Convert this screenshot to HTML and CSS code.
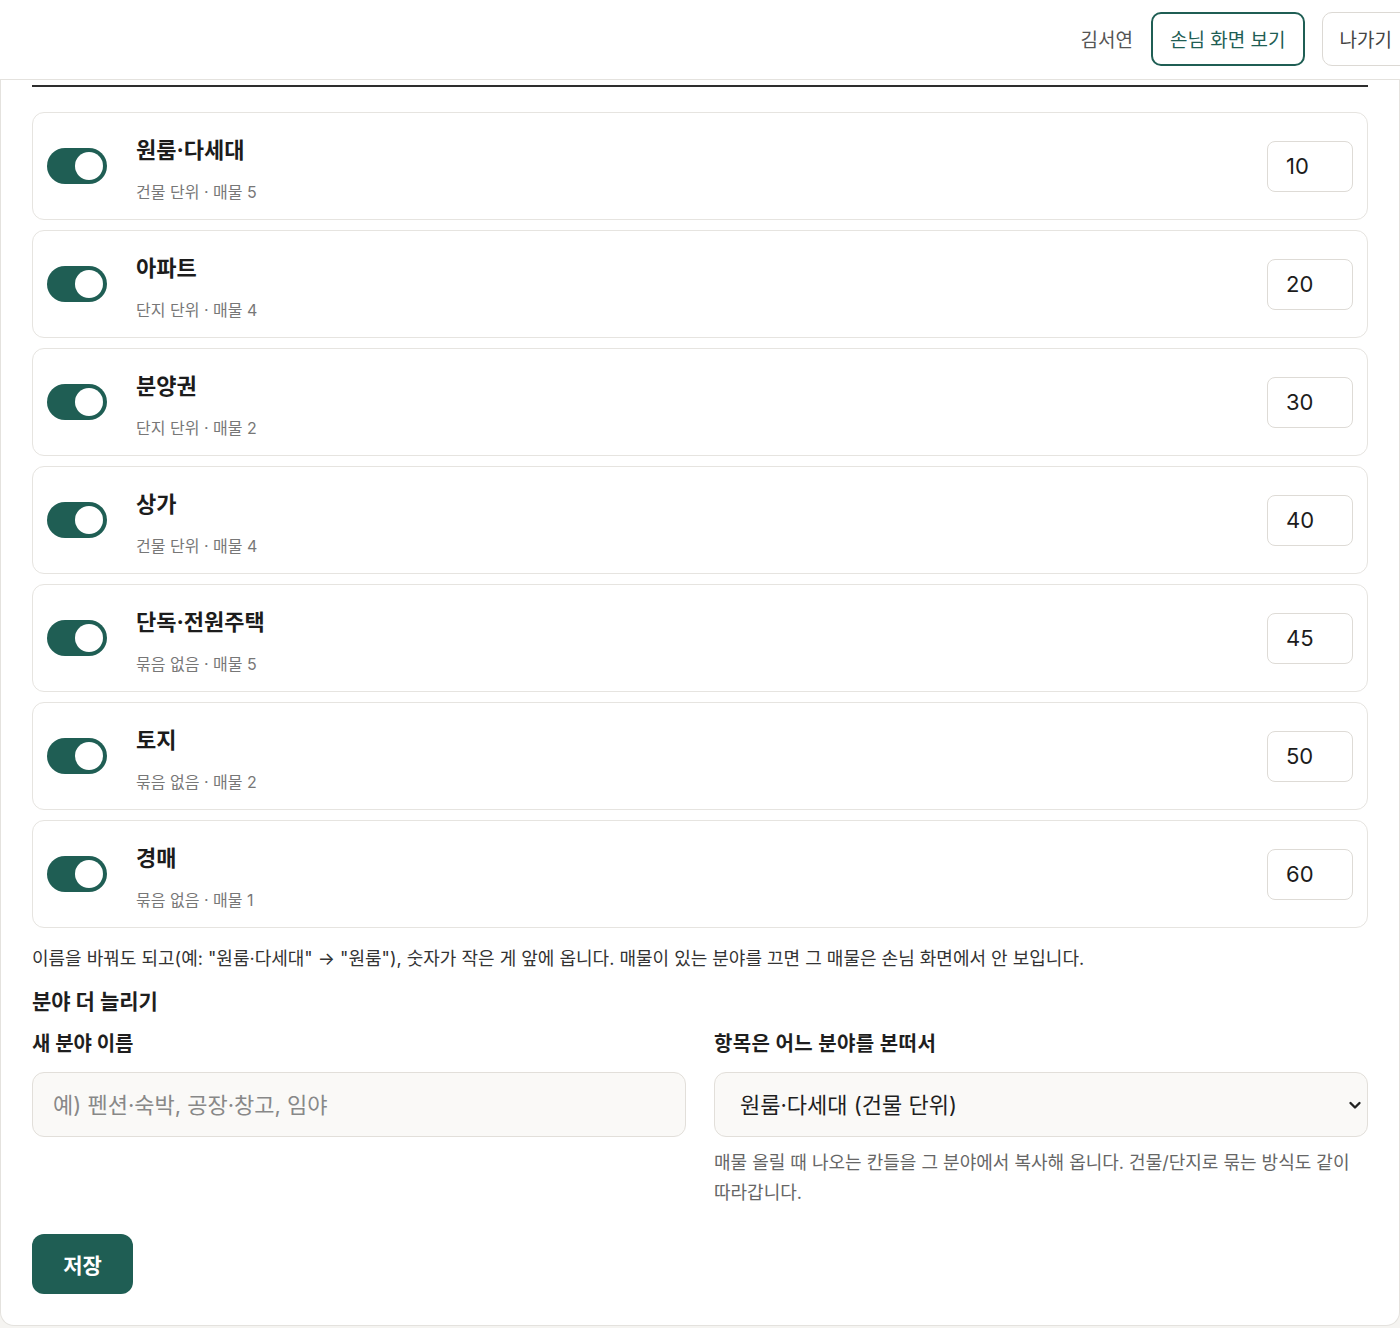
FILE: index.html
```html
<!DOCTYPE html>
<html lang="ko">
<head>
    <meta charset="UTF-8">
    <meta name="viewport" content="width=device-width, initial-scale=1.0">
    <title>분야 관리</title>
    <link rel="stylesheet" href="styles.css">
</head>
<body>
    <!-- Top bar -->
    <header class="topbar">
        <div class="topbar-nav">
            <span class="user-name">김서연</span>
            <a class="btn-outline btn-accent" href="#">손님 화면 보기</a>
            <a class="btn-outline" href="#">나가기</a>
        </div>
    </header>

    <!-- Category settings -->
    <main class="panel">
        <div class="panel-rule"></div>

        <ul class="category-list">
            <li class="category-row">
                <label class="switch"><input type="checkbox" checked><span class="slider"></span></label>
                <div class="category-info">
                    <div class="category-name">원룸·다세대</div>
                    <div class="category-meta">건물 단위 · 매물 5</div>
                </div>
                <input class="order-input" type="text" value="10">
            </li>
            <li class="category-row">
                <label class="switch"><input type="checkbox" checked><span class="slider"></span></label>
                <div class="category-info">
                    <div class="category-name">아파트</div>
                    <div class="category-meta">단지 단위 · 매물 4</div>
                </div>
                <input class="order-input" type="text" value="20">
            </li>
            <li class="category-row">
                <label class="switch"><input type="checkbox" checked><span class="slider"></span></label>
                <div class="category-info">
                    <div class="category-name">분양권</div>
                    <div class="category-meta">단지 단위 · 매물 2</div>
                </div>
                <input class="order-input" type="text" value="30">
            </li>
            <li class="category-row">
                <label class="switch"><input type="checkbox" checked><span class="slider"></span></label>
                <div class="category-info">
                    <div class="category-name">상가</div>
                    <div class="category-meta">건물 단위 · 매물 4</div>
                </div>
                <input class="order-input" type="text" value="40">
            </li>
            <li class="category-row">
                <label class="switch"><input type="checkbox" checked><span class="slider"></span></label>
                <div class="category-info">
                    <div class="category-name">단독·전원주택</div>
                    <div class="category-meta">묶음 없음 · 매물 5</div>
                </div>
                <input class="order-input" type="text" value="45">
            </li>
            <li class="category-row">
                <label class="switch"><input type="checkbox" checked><span class="slider"></span></label>
                <div class="category-info">
                    <div class="category-name">토지</div>
                    <div class="category-meta">묶음 없음 · 매물 2</div>
                </div>
                <input class="order-input" type="text" value="50">
            </li>
            <li class="category-row">
                <label class="switch"><input type="checkbox" checked><span class="slider"></span></label>
                <div class="category-info">
                    <div class="category-name">경매</div>
                    <div class="category-meta">묶음 없음 · 매물 1</div>
                </div>
                <input class="order-input" type="text" value="60">
            </li>
        </ul>

        <p class="note">이름을 바꿔도 되고(예: "원룸·다세대" → "원룸"), 숫자가 작은 게 앞에 옵니다. 매물이 있는 분야를 끄면 그 매물은 손님 화면에서 안 보입니다.</p>

        <h3 class="section-title">분야 더 늘리기</h3>

        <div class="add-grid">
            <div class="field">
                <label class="field-label" for="new-name">새 분야 이름</label>
                <input class="field-input" id="new-name" type="text" placeholder="예) 펜션·숙박, 공장·창고, 임야">
            </div>
            <div class="field">
                <label class="field-label" for="base-category">항목은 어느 분야를 본떠서</label>
                <div class="select-wrap">
                    <select class="field-input field-select" id="base-category">
                        <option>원룸·다세대 (건물 단위)</option>
                        <option>아파트 (단지 단위)</option>
                        <option>분양권 (단지 단위)</option>
                        <option>상가 (건물 단위)</option>
                        <option>단독·전원주택 (묶음 없음)</option>
                        <option>토지 (묶음 없음)</option>
                        <option>경매 (묶음 없음)</option>
                    </select>
                    <svg class="select-arrow" width="14" height="14" viewBox="0 0 14 14"><path d="M2.5 5l4.5 4.5L11.5 5" fill="none" stroke="#222" stroke-width="2.4" stroke-linecap="round" stroke-linejoin="round"/></svg>
                </div>
                <p class="field-help">매물 올릴 때 나오는 칸들을 그 분야에서 복사해 옵니다. 건물/단지로 묶는 방식도 같이 따라갑니다.</p>
            </div>
        </div>

        <button class="btn-save">저장</button>
    </main>
</body>
</html>
```

FILE: styles.css
```css
body {
    font-family: "Inter", "Noto Sans CJK KR", sans-serif;
    margin: 0;
    padding: 0;
    background-color: #f5f4f1;
    color: #1f1f1f;
    width: 1400px;
    overflow: hidden;
}

/* top bar */
.topbar {
    height: 79px;
    background-color: #fff;
    border-bottom: 1px solid #e4e2de;
    display: flex;
    justify-content: flex-end;
    align-items: center;
    overflow: hidden;
}

.topbar-nav {
    display: flex;
    align-items: center;
    gap: 17px;
    margin-right: -10px;
    margin-top: -2px;
}

.user-name {
    font-size: 19px;
    color: #555;
    margin-right: 1px;
}

.btn-outline {
    display: inline-flex;
    align-items: center;
    height: 54px;
    padding: 0 17px;
    border: 1px solid #dcd9d4;
    border-radius: 10px;
    background-color: #fff;
    font-size: 19px;
    color: #444;
    text-decoration: none;
    box-sizing: border-box;
}

.btn-accent {
    border: 2px solid #1f5e54;
    color: #1f5e54;
}

/* panel */
.panel {
    background-color: #fff;
    border: 1px solid #e4e2de;
    border-top: none;
    border-radius: 0 0 14px 14px;
    padding: 5px 31px 31px;
    margin-bottom: 2px;
}

.panel-rule {
    height: 2px;
    background-color: #2e2e2e;
}

.category-list {
    list-style: none;
    margin: 25px 0 0;
    padding: 0;
    display: flex;
    flex-direction: column;
    gap: 10px;
}

.category-row {
    display: flex;
    align-items: center;
    height: 108px;
    box-sizing: border-box;
    border: 1px solid #e6e4e0;
    border-radius: 12px;
    padding: 0 14px;
}

.switch {
    position: relative;
    width: 60px;
    height: 36px;
    flex-shrink: 0;
}

.switch input {
    display: none;
}

.slider {
    position: absolute;
    inset: 0;
    border-radius: 18px;
    background-color: #cfcbc4;
}

.slider::after {
    content: "";
    position: absolute;
    top: 4px;
    left: 4px;
    width: 28px;
    height: 28px;
    border-radius: 50%;
    background-color: #fff;
}

.switch input:checked + .slider {
    background-color: #1f5e54;
}

.switch input:checked + .slider::after {
    left: 28px;
}

.category-info {
    flex: 1;
    margin-left: 29px;
    margin-top: 6px;
}

.category-name {
    font-size: 22px;
    font-weight: 700;
    color: #1c1c1c;
    line-height: 30px;
}

.category-meta {
    font-size: 16px;
    color: #777;
    margin-top: 16px;
    line-height: 22px;
}

.order-input {
    width: 86px;
    height: 51px;
    box-sizing: border-box;
    border: 1px solid #dedbd6;
    border-radius: 8px;
    padding: 0 18px;
    font-family: inherit;
    font-size: 22px;
    color: #1c1c1c;
    background-color: #fff;
    outline: none;
}

/* bottom form */
.note {
    font-size: 18px;
    color: #333;
    line-height: 28px;
    margin: 17px 0 0;
}

.section-title {
    font-size: 21px;
    font-weight: 700;
    margin: 14px 0 0;
    line-height: 30px;
}

.add-grid {
    display: grid;
    grid-template-columns: 1fr 1fr;
    gap: 28px;
    margin-top: 12px;
}

.field-label {
    display: block;
    font-size: 20px;
    font-weight: 700;
    line-height: 30px;
    color: #1f1f1f;
}

.field-label[for="base-category"] {
    letter-spacing: 0.4px;
}

.field-input {
    display: block;
    width: 100%;
    height: 65px;
    box-sizing: border-box;
    margin-top: 13px;
    border: 1px solid #e2dfda;
    border-radius: 12px;
    background-color: #faf9f7;
    padding: 0 20px;
    font-family: inherit;
    font-size: 22px;
    color: #1f1f1f;
    outline: none;
}

.field-input::placeholder {
    color: #888;
}

.select-wrap {
    position: relative;
}

.field-select {
    appearance: none;
    -webkit-appearance: none;
    padding-left: 25px;
}

.select-arrow {
    position: absolute;
    right: 6px;
    top: 26px;
}

.field-help {
    font-size: 18px;
    color: #666;
    line-height: 30px;
    margin: 11px 0 0;
}

.btn-save {
    margin-top: 26px;
    width: 101px;
    height: 60px;
    border: none;
    border-radius: 12px;
    background-color: #1f5e54;
    color: #fff;
    font-family: inherit;
    font-size: 21px;
    font-weight: 700;
    cursor: pointer;
}
```
